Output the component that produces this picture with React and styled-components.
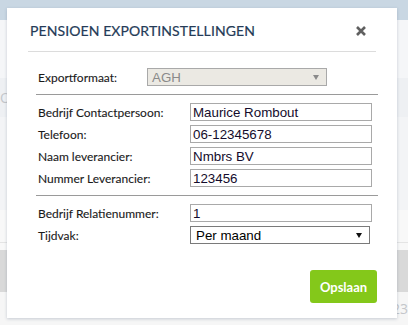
import React from "react"
import styled, { createGlobalStyle } from "styled-components"

const GlobalStyle = createGlobalStyle`
  html, body {
    margin: 0;
    padding: 0;
  }
  body {
    width: 408px;
    height: 325px;
    overflow: hidden;
    background: #f6f6f6;
    font-family: Lato, "Open Sans", sans-serif;
  }
`

const Page = styled.div`
  position: relative;
  width: 408px;
  height: 325px;
  overflow: hidden;
`

const Band = styled.div`
  height: ${(p) => p.h}px;
  background: ${(p) => p.bg};
  border-bottom: ${(p) => (p.line ? "1px solid #e4e4e4" : "none")};
  display: flex;
  align-items: center;
  justify-content: ${(p) => (p.right ? "flex-end" : "flex-start")};
  font-family: "Open Sans", sans-serif;
  font-size: 14px;
  color: #c4c6ca;
  box-sizing: border-box;
`

const Modal = styled.div`
  position: absolute;
  left: 7px;
  top: 8px;
  width: 390px;
  height: 310px;
  background: #fff;
  box-shadow: 0 1px 3px rgba(60, 80, 110, 0.25);
  display: flex;
  flex-direction: column;
`

const Header = styled.div`
  margin: 0 21px;
  height: 43px;
  border-bottom: 1px solid #dcdcdc;
  display: flex;
  align-items: center;
  justify-content: space-between;
`

const Title = styled.h2`
  margin: 2px 0 0 2px;
  font-family: Lato, sans-serif;
  font-size: 14px;
  font-weight: 400;
  letter-spacing: 0.1px;
  color: #253b57;
  -webkit-text-stroke: 0.2px #253b57;
`

const Close = styled.button`
  border: 0;
  background: none;
  padding: 0;
  margin: 2px 10px 0 0;
  width: 10px;
  height: 10px;
  display: flex;
`

const Form = styled.div`
  margin-left: 29px;
  width: 342px;
  display: flex;
  flex-direction: column;
`

const Section = styled.div`
  display: flex;
  flex-direction: column;
  gap: 4px;
  padding: ${(p) => p.pad};
  border-bottom: ${(p) => (p.divider ? "1px solid #9a9a9a" : "none")};
`

const Row = styled.div`
  display: grid;
  grid-template-columns: ${(p) => p.labelWidth || 152}px 1fr;
  align-items: center;
  padding-left: 2px;
`

const Label = styled.label`
  font-family: Lato, sans-serif;
  font-size: 12px;
  color: #1a1a1a;
  -webkit-text-stroke: 0.1px #1a1a1a;
`

const Input = styled.input`
  box-sizing: border-box;
  width: ${(p) => p.w || 182}px;
  height: 18px;
  border: 1px solid #a9a9a9;
  padding: 0 2px;
  font-family: "Liberation Sans", Arial, sans-serif;
  font-size: 13.33px;
  color: #140c2c;
  outline: none;
`

const SelectBox = styled.div`
  box-sizing: border-box;
  width: ${(p) => p.w}px;
  height: 18px;
  border: 1px solid ${(p) => (p.disabled ? "#a9a9a9" : "#7a7a7a")};
  background: ${(p) => (p.disabled ? "#ebe9e3" : "#fff")};
  display: flex;
  align-items: center;
  justify-content: space-between;
  padding: 0 7px 0 ${(p) => (p.disabled ? 4 : 5)}px;
  font-family: "Liberation Sans", Arial, sans-serif;
  font-size: 13.33px;
  color: ${(p) => (p.disabled ? "#8a8a8a" : "#000")};
`

const Arrow = styled.span`
  width: 0;
  height: 0;
  border-left: 3px solid transparent;
  border-right: 3px solid transparent;
  border-top: 5px solid ${(p) => (p.disabled ? "#8a8a8a" : "#111")};
`

const Footer = styled.div`
  display: flex;
  justify-content: flex-end;
  padding: 26px 20px 0 0;
`

const Button = styled.button`
  width: 67px;
  height: 33px;
  border: 0;
  border-radius: 3px;
  background: #84c81a;
  color: #fff;
  font-family: Lato, sans-serif;
  font-weight: 700;
  font-size: 13px;
  cursor: pointer;
`

const fields = [
  { label: "Bedrijf Contactpersoon:", value: "Maurice Rombout" },
  { label: "Telefoon:", value: "06-12345678" },
  { label: "Naam leverancier:", value: "Nmbrs BV" },
  { label: "Nummer Leverancier:", value: "123456" },
]

export default function App() {
  return (
    <>
      <GlobalStyle />
      <Page>
        <Band h={20} bg="#c9d7e3" />
        <Band h={58} bg="#f5f6f8" />
        <Band h={39} bg="#eef0f3">Ov</Band>
        <Band h={93} bg="#f3f4f6" />
        <Band h={33} bg="#f8f8f8" line />
        <Band h={7} bg="#f8f8f8" />
        <Band h={42} bg="#d9d9d9" />
        <Band h={33} bg="#f6f6f6" right>
          23
        </Band>

        <Modal>
          <Header>
            <Title>PENSIOEN EXPORTINSTELLINGEN</Title>
            <Close aria-label="Sluiten">
              <svg width="10" height="10" viewBox="0 0 10 10">
                <path d="M1 1L9 9M9 1L1 9" stroke="#606060" strokeWidth="2.6" />
              </svg>
            </Close>
          </Header>
          <Form>
            <Section pad="16px 0 8px" divider>
              <Row labelWidth={109}>
                <Label>Exportformaat:</Label>
                <SelectBox w={180} disabled>
                  AGH
                  <Arrow disabled />
                </SelectBox>
              </Row>
            </Section>
            <Section pad="8px 0 8px" divider>
              {fields.map((f) => (
                <Row key={f.label}>
                  <Label>{f.label}</Label>
                  <Input defaultValue={f.value} />
                </Row>
              ))}
            </Section>
            <Section pad="8px 0 0">
              <Row>
                <Label>Bedrijf Relatienummer:</Label>
                <Input defaultValue="1" />
              </Row>
              <Row>
                <Label>Tijdvak:</Label>
                <SelectBox w={180}>
                  Per maand
                  <Arrow />
                </SelectBox>
              </Row>
            </Section>
          </Form>
          <Footer>
            <Button>Opslaan</Button>
          </Footer>
        </Modal>
      </Page>
    </>
  )
}
